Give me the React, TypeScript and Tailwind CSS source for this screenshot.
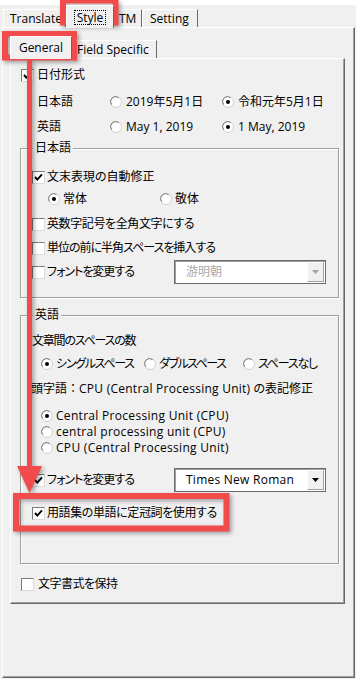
import React from "react";

function Check({ checked = false }: { checked?: boolean }) {
  return (
    <span className="flex h-[13px] w-[13px] shrink-0 items-center justify-center border border-t-[#7a7a7a] border-l-[#7a7a7a] border-r-[#dcdcdc] border-b-[#dcdcdc] bg-white">
      {checked && (
        <svg width="11" height="11" viewBox="0 0 11 11">
          <path d="M2 5 L4.3 7.6 L9 2.4" fill="none" stroke="#000" strokeWidth="1.9" />
        </svg>
      )}
    </span>
  );
}

function Radio({ checked = false }: { checked?: boolean }) {
  return (
    <svg width="12" height="12" viewBox="0 0 12 12" className="shrink-0">
      <circle cx="6" cy="6" r="5.5" fill="#fff" stroke="#d0d0d0" />
      <path d="M1.6 8.6 A5 5 0 0 1 8.6 1.6" fill="none" stroke="#7a7a7a" strokeWidth="1" />
      {checked && <circle cx="6" cy="6" r="2" fill="#000" />}
    </svg>
  );
}

function Combo({ text, disabled = false }: { text: string; disabled?: boolean }) {
  return (
    <div className="ml-auto mr-[12px] flex h-[24px] w-[152px] shrink-0 border border-[#6b6b6b] bg-white shadow-[inset_1px_1px_0_#a0a0a0]">
      <div className={disabled ? "flex flex-1 items-center pl-[11px] text-[#a8a8a8]" : "flex flex-1 items-center pl-[11px] tracking-[0.25px] text-black"}>
        {text}
      </div>
      <div className="my-[1px] mr-[1px] flex w-[17px] items-center justify-center border border-t-white border-l-white border-r-[#a0a0a0] border-b-[#a0a0a0] bg-[#f0f0f0]">
        <svg width="7" height="4" viewBox="0 0 7 4">
          <path d="M0 0 H7 L3.5 4 Z" fill={disabled ? "#a0a0a0" : "#000"} />
        </svg>
      </div>
    </div>
  );
}

export default function App() {
  return (
    <div className="relative h-[679px] w-[356px] overflow-hidden bg-[#f0f0f0] font-['Open_Sans','Noto_Sans_CJK_JP',sans-serif] text-[12px] leading-[16px] text-black [font-feature-settings:'palt']">
      <div className="h-[5px] bg-white" />
      {/* outer tabs */}
      <div className="flex h-[22px] items-end pl-[3px]">
        <div className="flex h-[18px] w-[63px] items-center border-t border-l border-white border-r border-r-[#696969] pl-[6px]">
          Translate
        </div>
        <div className="relative z-10 -mb-[1px] flex h-[23px] w-[48px] items-center justify-center border-t border-l border-white border-r border-r-[#696969] bg-[#f0f0f0]">
          <span className="border border-dotted border-black px-[2px] leading-[13px]">Style</span>
        </div>
        <div className="flex h-[18px] w-[28px] items-center border-t border-white border-r border-r-[#696969] pl-[5px]">
          TM
        </div>
        <div className="flex h-[18px] w-[56px] items-center border-t border-l border-white border-r border-r-[#696969] pl-[7px]">
          Setting
        </div>
      </div>
      {/* outer page */}
      <div className="ml-[2px] flex h-[651px] w-[353px] flex-col border border-t-white border-l-white border-r-[#696969] border-b-[#696969] pl-[7px] pt-[8px] shadow-[inset_-1px_-1px_0_#a0a0a0]">
        {/* inner tabs */}
        <div className="flex h-[22px] items-end">
          <div className="relative z-10 -mb-[1px] flex h-[23px] w-[62px] items-center justify-center border-t border-l border-white border-r border-r-[#696969] bg-[#f0f0f0]">
            General
          </div>
          <div className="flex h-[18px] w-[85px] items-center border-t border-white border-r border-r-[#696969] pl-[5px]">
            Field Specific
          </div>
        </div>
        {/* inner page */}
        <div className="flex h-[546px] w-[335px] flex-col border border-t-white border-l-white border-r-[#696969] border-b-[#696969] pt-[6px] shadow-[inset_-1px_-1px_0_#a0a0a0]">
          <div className="flex h-[20px] items-center gap-[3px] pl-[10px]">
            <Check checked />
            <span>日付形式</span>
          </div>
          <div className="mt-[5px] flex h-[24px] items-center pl-[26px]">
            <span className="w-[73px]">日本語</span>
            <span className="flex w-[112px] items-center gap-[4px]">
              <Radio />
              <span>2019年5月1日</span>
            </span>
            <span className="flex items-center gap-[4px]">
              <Radio checked />
              <span>令和元年5月1日</span>
            </span>
          </div>
          <div className="mt-[1px] flex h-[24px] items-center pl-[26px]">
            <span className="w-[73px]">英語</span>
            <span className="flex w-[112px] items-center gap-[4px]">
              <Radio />
              <span>May 1, 2019</span>
            </span>
            <span className="flex items-center gap-[4px]">
              <Radio checked />
              <span>1 May, 2019</span>
            </span>
          </div>

          {/* group 日本語 */}
          <div className="ml-[9px] mt-[9px] w-[319px] border border-[#a0a0a0] pb-[13px] shadow-[1px_1px_0_#fff,inset_1px_1px_0_#fff]">
            <div className="-mt-[8px] ml-[12px] w-fit bg-[#f0f0f0] px-[2px] leading-[14px]">日本語</div>
            <div className="mt-[11px] flex h-[22px] items-center gap-[2px] pl-[11px]">
              <Check checked />
              <span>文末表現の自動修正</span>
            </div>
            <div className="flex h-[22px] items-center pl-[27px]">
              <span className="flex w-[112px] items-center gap-[3px]">
                <Radio checked />
                <span>常体</span>
              </span>
              <span className="flex items-center gap-[3px]">
                <Radio />
                <span>敬体</span>
              </span>
            </div>
            <div className="mt-[2px] flex h-[24px] items-center gap-[2px] pl-[11px]">
              <Check />
              <span className="tracking-[-0.4px]">英数字記号を全角文字にする</span>
            </div>
            <div className="flex h-[24px] items-center gap-[2px] pl-[11px]">
              <Check />
              <span className="tracking-[-1px]">単位の前に半角スペースを挿入する</span>
            </div>
            <div className="flex h-[24px] items-center gap-[2px] pl-[11px]">
              <Check />
              <span className="tracking-[-1px]">フォントを変更する</span>
              <Combo text="游明朝" disabled />
            </div>
          </div>

          {/* group 英語 */}
          <div className="ml-[9px] mt-[17px] w-[319px] border border-[#a0a0a0] pb-[39px] shadow-[1px_1px_0_#fff,inset_1px_1px_0_#fff]">
            <div className="-mt-[8px] ml-[12px] w-fit bg-[#f0f0f0] px-[2px] leading-[14px]">英語</div>
            <div className="mt-[9px] flex h-[20px] items-center pl-[11px] tracking-[-1.2px]">文章間のスペースの数</div>
            <div className="mt-[1px] flex h-[24px] items-center whitespace-nowrap pl-[20px]">
              <span className="flex w-[103px] items-center gap-[3px]">
                <Radio checked />
                <span className="tracking-[-1.3px]">シングルスペース</span>
              </span>
              <span className="flex w-[99px] items-center gap-[3px]">
                <Radio />
                <span className="tracking-[-1.5px]">ダブルスペース</span>
              </span>
              <span className="flex items-center gap-[3px]">
                <Radio />
                <span className="tracking-[-1.2px]">スペースなし</span>
              </span>
            </div>
            <div className="mt-[1px] flex h-[24px] items-center whitespace-nowrap pl-[10px]">
              <span>頭字語</span>
              <span className="[font-feature-settings:normal]">：</span>
              <span className="tracking-[0.25px]">CPU (Central Processing Unit)</span>
              <span>&nbsp;の表記修正</span>
            </div>
            <div className="mt-[7px] flex h-[16px] items-center gap-[3px] pl-[20px]">
              <Radio checked />
              <span className="tracking-[0.3px]">Central Processing Unit (CPU)</span>
            </div>
            <div className="flex h-[16px] items-center gap-[3px] pl-[20px]">
              <Radio />
              <span className="tracking-[0.3px]">central processing unit (CPU)</span>
            </div>
            <div className="flex h-[16px] items-center gap-[3px] pl-[20px]">
              <Radio />
              <span className="tracking-[0.3px]">CPU (Central Processing Unit)</span>
            </div>
            <div className="mt-[12px] flex h-[24px] items-center gap-[2px] pl-[11px]">
              <Check checked />
              <span className="tracking-[-1px]">フォントを変更する</span>
              <Combo text="Times New Roman" />
            </div>
            <div className="mt-[10px] flex h-[22px] items-center gap-[2px] pl-[11px]">
              <Check checked />
              <span className="tracking-[-0.4px]">用語集の単語に定冠詞を使用する</span>
            </div>
          </div>

          <div className="mt-[10px] flex h-[20px] items-center gap-[4px] pl-[10px]">
            <Check />
            <span className="tracking-[-0.5px]">文字書式を保持</span>
          </div>
        </div>
      </div>

      {/* red annotations overlay */}
      <svg
        className="pointer-events-none absolute left-0 top-0 drop-shadow-[2px_2px_2px_rgba(0,0,0,0.35)]"
        width="356"
        height="679"
        viewBox="0 0 356 679"
      >
        <rect x="63" y="0.5" width="52.5" height="22" fill="none" stroke="#f14b4b" strokeWidth="6" />
        <rect x="5" y="34" width="69" height="23.5" fill="none" stroke="#f14b4b" strokeWidth="6" />
        <line x1="29.5" y1="60" x2="29.5" y2="470" stroke="#f14b4b" strokeWidth="5" />
        <polygon points="17,466 42,466 29.5,493" fill="#f14b4b" />
        <rect x="16" y="496" width="210.5" height="32.5" fill="none" stroke="#f14b4b" strokeWidth="6" />
      </svg>
    </div>
  );
}
